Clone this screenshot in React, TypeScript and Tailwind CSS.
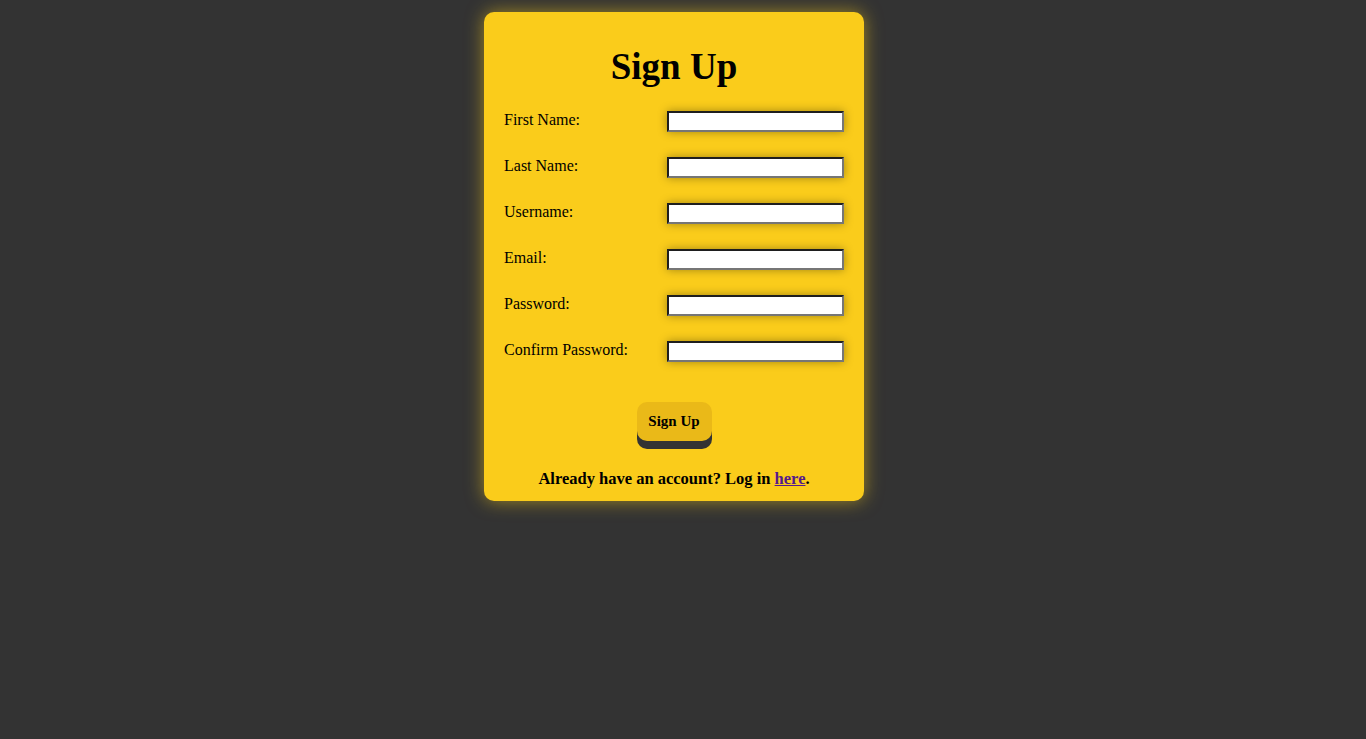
import React from 'react';

const fields = ['First Name:', 'Last Name:', 'Username:', 'Email:', 'Password:', 'Confirm Password:'];

const App: React.FC = () => {
  return (
    <div className="min-h-[739px] bg-[#333333] font-['Liberation_Serif',serif] text-black">
      <div className="w-[398px] mx-auto pt-3">
        <div className="w-[380px] bg-[#facc1b] rounded-[10px] shadow-[0_0_18px_rgba(250,204,21,0.55)] px-5 pt-[34px] pb-[12px]">
          <h1 className="text-center text-[37px] leading-[42px] font-bold">Sign Up</h1>
          <form className="mt-[23px] flex flex-col gap-[25px]" onSubmit={(e) => e.preventDefault()}>
            {fields.map((label) => (
              <div key={label} className="flex items-start justify-between">
                <label className="text-[16px] leading-[20px] -mt-px">{label}</label>
                <input
                  type={label.includes('Password') ? 'password' : 'text'}
                  className="w-[177px] h-[21px] bg-white border-2 border-t-[#1e1e1e] border-l-[#1e1e1e] border-r-[#767676] border-b-[#767676] shadow-[0_0_10px_rgba(0,0,0,0.35)] outline-none"
                />
              </div>
            ))}
            <div className="flex justify-center mt-[15px]">
              <button
                type="submit"
                className="w-[75px] h-[39px] bg-[#eab918] rounded-[10px] shadow-[0_8px_0_#333333] text-[15px] font-bold"
              >
                Sign Up
              </button>
            </div>
          </form>
          <p className="mt-[28px] text-center text-[16.5px] leading-[20px] font-bold">
            Already have an account? Log in <a href="#" className="text-[#551a8b] underline">here</a>.
          </p>
        </div>
      </div>
    </div>
  );
};

export default App;
